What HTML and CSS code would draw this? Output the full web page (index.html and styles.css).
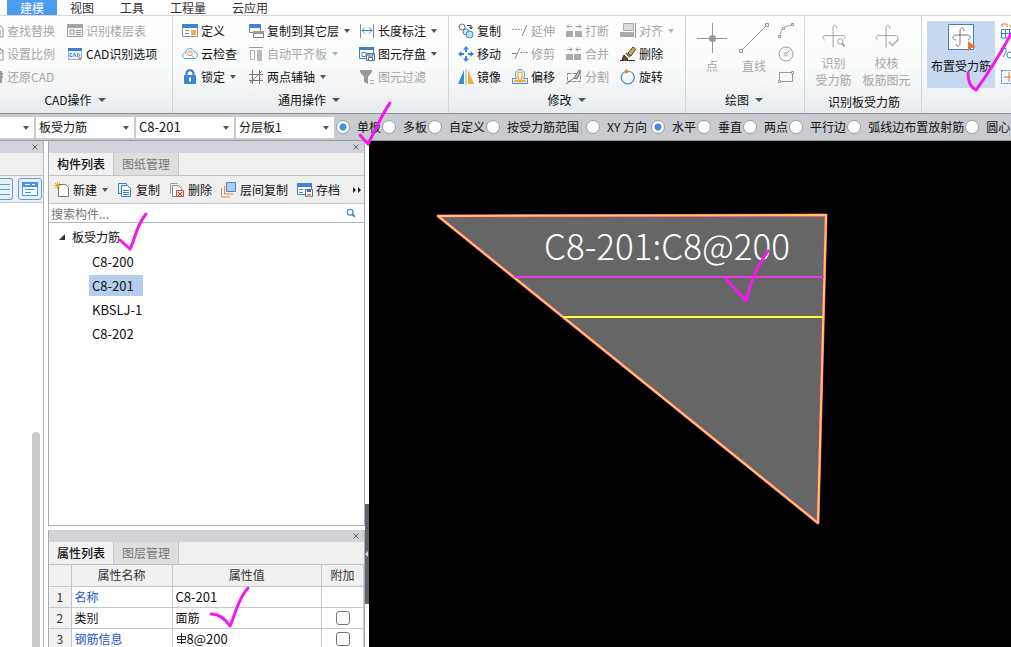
FILE: index.html
```html
<!DOCTYPE html>
<html lang="zh-CN">
<head>
<meta charset="utf-8">
<title>建模</title>
<link rel="stylesheet" href="styles.css">
</head>
<body>
<div class="app">
  <nav class="menu">
    <button class="menu-tab active">建模</button>
    <button class="menu-tab">视图</button>
    <button class="menu-tab">工具</button>
    <button class="menu-tab wide">工程量</button>
    <button class="menu-tab wide">云应用</button>
  </nav>

  <div class="ribbon">
    <section class="group group-cad">
      <div class="tools cols-cad">
        <button class="tool" disabled><svg class="clipped" viewBox="12 0 4 16"><path d="M8 3h5l2 3v8H8M12 7v6" fill="none" stroke="#999"/></svg>查找替换</button>
        <button class="tool" disabled><svg class="icon" viewBox="0 0 16 16"><path d="M.5 2.500h15v11H.5z" fill="#f2f2f2" stroke="#a5a5a5"/><path d="M0 1h16v4H0z" fill="#a5a5a5"/><path d="M3 7h4v4H3zM9 7.500h5M9 9.500h5M9 11.500h5" fill="none" stroke="#999"/></svg>识别楼层表</button>
        <button class="tool" disabled><svg class="clipped" viewBox="12 0 4 16"><path d="M8 4h7v10H8M12 2l3 3-3 3" fill="none" stroke="#999"/></svg>设置比例</button>
        <button class="tool"><svg class="icon" viewBox="0 0 16 16"><path d="M1.500 2.500h13v11h-13z" fill="#eaf3fd" stroke="#8db5e6"/><path d="M1 2h14v3H1z" fill="#3c7fd0"/><path d="M5 7.500H3v3h2M6 11l1.500-4L9 11M10.500 7.500v3c3 0 3-3 0-3" fill="none" stroke="#4a90d9"/><path d="M11 10l4 2-2 3z" fill="#ef8b55"/></svg>CAD识别选项</button>
        <button class="tool" disabled><svg class="clipped" viewBox="12 0 4 16"><path d="M13 2v12M10 5h5M10 8h5" fill="none" stroke="#999" stroke-width="2"/></svg>还原CAD</button>
      </div>
      <button class="caption drop">CAD操作</button>
    </section>

    <section class="group group-common">
      <div class="tools cols-common">
        <button class="tool"><svg class="icon" viewBox="0 0 16 16"><path d="M.5 2.500h15v11H.5z" fill="#fff" stroke="#7f97b5"/><path d="M0 1h16v4H0z" fill="#4484cf"/><path d="M3 7.500h4M3 10.500h4" stroke="#888"/><path d="M9 7h5v5H9z" fill="#f0b33c"/></svg>定义</button>
        <button class="tool drop"><svg class="icon" viewBox="0 0 16 16"><path d="M1.500 2.500h11v7h-11z" fill="#fff" stroke="#6b87ab"/><path d="M1 1h12v4H1z" fill="#4484cf"/><path d="M5.500 8.500h10v6h-10z" fill="#fff" stroke="#777"/><path d="M5 8h11v3H5z" fill="#999"/></svg>复制到其它层</button>
        <button class="tool drop"><svg class="icon" viewBox="0 0 16 16"><path d="M1.500 1v14M14.500 1v14" stroke="#888"/><path d="M3 7.500h10M6 4.500l-3 3 3 3M10 4.500l3 3-3 3" fill="none" stroke="#3c7fc9"/></svg>长度标注</button>
        <button class="tool"><svg class="icon" viewBox="0 0 16 16"><path d="M4 12.500C-.5 12.500-.5 7 3.500 7 4 1.500 11 1 12 6c4.500 0 4.500 6.500 0 6.500z" fill="#fff" stroke="#5b9be0"/><circle cx="8" cy="7.500" r="2.300" fill="none" stroke="#e98b46"/><path d="M10 9.500l2 2.500" stroke="#e98b46"/></svg>云检查</button>
        <button class="tool drop" disabled><svg class="icon" viewBox="0 0 16 16"><path d="M1 1.500h14" stroke="#999"/><path d="M2.500 4.500h4v9h-4z" fill="#fff" stroke="#aaa"/><path d="M9 4h5v11H9z" fill="#bbb"/></svg>自动平齐板</button>
        <button class="tool drop"><svg class="icon" viewBox="0 0 16 16"><path d="M.5 1.500h14v11H.5z" fill="#fff" stroke="#3b80c9"/><path d="M0 1h15v3H0z" fill="#3b80c9"/><path d="M3 6.500h4v4H3z" fill="none" stroke="#4b89cc"/><path d="M7.500 7.500h8v7h-8z" fill="#e9f2fc" stroke="#526f94"/><path d="M9.500 11.500h4v3h-4zM9 8h5v2H9z" fill="#fff" stroke="#526f94"/></svg>图元存盘</button>
        <button class="tool drop"><svg class="icon" viewBox="0 0 16 16"><path d="M4.500 7V5c0-5 7-5 7 0v2" fill="none" stroke="#3c78c4" stroke-width="2"/><rect x="2" y="6" width="12" height="9" rx="1" fill="#3f83d3"/><path d="M8 8.500v4" stroke="#fff" stroke-width="2"/></svg>锁定</button>
        <button class="tool drop"><svg class="icon" viewBox="0 0 16 16"><path d="M4.500 1v14M11.500 1v14M1 5.500h14M1 11.500h14" stroke="#777"/><path d="M2 14L14 2" stroke="#a8694a"/></svg>两点辅轴</button>
        <button class="tool" disabled><svg class="icon" viewBox="0 0 16 16"><path d="M1 1h12v2L9 8v7l-4-2V8L1 3z" fill="#999"/><path d="M11 11.500h4M11 14.500h4" stroke="#aaa"/></svg>图元过滤</button>
      </div>
      <button class="caption drop">通用操作</button>
    </section>

    <section class="group group-edit">
      <div class="tools cols-edit">
        <button class="tool"><svg class="icon" viewBox="0 0 16 16"><circle cx="4" cy="4" r="3" fill="#f3f3f3" stroke="#777"/><path d="M9 2.500h4v3M11.500 4L13 6l1.500-2" fill="none" stroke="#333"/><circle cx="8" cy="9" r="3" fill="#d9ebfb" stroke="#3d86c9"/><circle cx="11.500" cy="11.500" r="3.500" fill="#bfe0f8" stroke="#3d86c9"/></svg>复制</button>
        <button class="tool" disabled><svg class="icon" viewBox="0 0 16 16"><path d="M0 6.500h10" stroke="#999" stroke-dasharray="2 1"/><path d="M10 13l5-11" stroke="#888"/></svg>延伸</button>
        <button class="tool" disabled><svg class="icon" viewBox="0 0 16 16"><path d="M0 8h7v6H0zM9 8h7v6H9z" fill="#aaa"/><path d="M6 3.500H1M3 1.500l-2 2 2 2M10 3.500h5M13 1.500l2 2-2 2" fill="none" stroke="#999"/></svg>打断</button>
        <button class="tool drop" disabled><svg class="icon" viewBox="0 0 16 16"><path d="M3.500.5h10v7h-10z" fill="#ddd" stroke="#aaa"/><path d="M0 9h14v5H0z" fill="#aaa"/><path d="M15.500 0v15" stroke="#999"/></svg>对齐</button>
        <button class="tool"><svg class="icon" viewBox="0 0 16 16"><path d="M8 0l3 3.500H9V6H7V3.500H5zM8 16l-3-3.500h2V10h2v2.500h2zM0 8l3.500-3v2H6v2H3.500v2zM16 8l-3.500 3V9H10V7h2.500V5z" fill="#3d82cb"/></svg>移动</button>
        <button class="tool" disabled><svg class="icon" viewBox="0 0 16 16"><path d="M0 7.500h5M3 13L8 2" stroke="#888"/><path d="M8 6.500h8" stroke="#999" stroke-dasharray="2 1"/></svg>修剪</button>
        <button class="tool" disabled><svg class="icon" viewBox="0 0 16 16"><path d="M0 8h7v6H0zM8 8h7v6H8z" fill="#aaa"/><path d="M1 3.500h5M4 1.500l2 2-2 2M15 3.500h-5M12 1.500l-2 2 2 2" fill="none" stroke="#999"/></svg>合并</button>
        <button class="tool"><svg class="icon" viewBox="0 0 16 16"><path d="M0 14.500h4M7 14.500h8" stroke="#333"/><path d="M8 7l5-6 2.500 2-4.500 7z" fill="#d9a866" stroke="#5e3a1c"/><path d="M4 9l4 4-2 1.500-4-1z" fill="#a33b28" stroke="#3b2a20"/><path d="M6 7l4 4" stroke="#4c8650" stroke-width="2"/></svg>删除</button>
        <button class="tool"><svg class="icon" viewBox="0 0 16 16"><path d="M6 1v14H0z" fill="#4386d6"/><path d="M10 1v14h6z" fill="#f0ac32"/><path d="M8 0v16" stroke="#b0b0b0"/></svg>镜像</button>
        <button class="tool"><svg class="icon" viewBox="0 0 16 16"><path d="M.5 14.500v-5h4C2 5 4 .5 8 .5s6 4.500 3.500 9h4v5z" fill="none" stroke="#4d8ed6"/><path d="M3 12.500v-1h4.500C4.500 7 5.500 3 8 3s3.500 4 .5 8.500H13v1z" fill="none" stroke="#efac3a" stroke-width="1.300"/></svg>偏移</button>
        <button class="tool" disabled><svg class="icon" viewBox="0 0 16 16"><path d="M1.500 4.500h13v8h-13z" fill="none" stroke="#888" stroke-dasharray="4 1"/><path d="M0 15L8 9M8 9l5-8 2 1-4 8z" fill="#bbb" stroke="#777"/></svg>分割</button>
        <button class="tool"><svg class="icon" viewBox="0 0 16 16"><path d="M10.500 2.500A6.500 6.500 0 1 1 5 2.500" fill="none" stroke="#4a91dc" stroke-width="1.300"/><path d="M5 0l6 2.500L5 5z" fill="#ed8b35"/></svg>旋转</button>
      </div>
      <button class="caption drop">修改</button>
    </section>

    <section class="group group-draw">
      <div class="bigs">
        <button class="big" disabled><svg class="picto" viewBox="0 0 30 30"><path d="M15.500 0v30M0 15.500h30" stroke="#999"/><circle cx="15.500" cy="15.500" r="3.500" fill="#999"/></svg><span>点</span></button>
        <button class="big" disabled><svg class="picto" viewBox="0 0 30 30"><path d="M3 27L27 3" stroke="#999"/><path d="M.5 26.500h3v3h-3zM26.500.5h3v3h-3z" fill="#fff" stroke="#999"/></svg><span>直线</span></button>
        <div class="stack">
          <button class="mini" aria-label="弧" disabled><svg class="icon" viewBox="0 0 16 16"><path d="M2 14C2 7 5 3 14 2" fill="none" stroke="#999"/><path d="M.5 12.500h2v2h-2zM4.500 4.500h2v2h-2zM13.500.5h2v2h-2z" fill="#fff" stroke="#999"/></svg></button>
          <button class="mini" aria-label="圆" disabled><svg class="icon" viewBox="0 0 16 16"><circle cx="8" cy="8" r="7" fill="none" stroke="#999"/><circle cx="7.500" cy="8.500" r="1.500" fill="none" stroke="#999"/><path d="M8.500 7.500l3-3" stroke="#999"/></svg></button>
          <button class="mini" aria-label="矩形" disabled><svg class="icon" viewBox="0 0 16 16"><path d="M1.500 3.500h13v9h-13z" fill="none" stroke="#999"/><path d="M.5 11.500h2v2h-2zM13.500 2.500h2v2h-2z" fill="#fff" stroke="#999"/></svg></button>
        </div>
      </div>
      <button class="caption drop">绘图</button>
    </section>

    <section class="group group-detect">
      <div class="bigs">
        <button class="big" disabled><svg class="picto" viewBox="0 0 30 30"><path d="M18 6c0-4.500-4-4.500-4-1v22M26 18c2-2 1-4-1-4H5c-3 0-3 4 0 5" fill="none" stroke="#999"/><circle cx="22" cy="20.500" r="3" fill="#f7f8f9" stroke="#999"/><path d="M24 23l3 3" stroke="#999" stroke-width="2"/></svg><span>识别<br>受力筋</span></button>
        <button class="big" disabled><svg class="picto" viewBox="0 0 30 30"><path d="M18 6c0-4.500-4-4.500-4-1v22M26 18c2-2 1-4-1-4H5c-3 0-3 4 0 5" fill="none" stroke="#999"/><path d="M17 21l4 4 7-7" fill="none" stroke="#bbb" stroke-width="2"/></svg><span>校核<br>板筋图元</span></button>
      </div>
      <button class="caption">识别板受力筋</button>
    </section>

    <section class="group group-place">
      <div class="bigs">
        <button class="big chosen"><svg class="picto" viewBox="0 0 30 30"><path d="M2.500 1.500h25v25h-25z" fill="#fff" stroke="#3c7fd0"/><path d="M18 8c0-4-4-4-4 0v12c0 4-4 4-4 1M10 17c-4 0-4-5 0-5h11c4 0 4 4 1 5" fill="none" stroke="#777"/><path d="M22 18l8 6-4 1-4 3z" fill="#e87530"/></svg><span>布置受力筋</span></button>
        <div class="stack">
          <button class="mini" aria-label="表格"><svg class="icon" viewBox="0 0 16 16"><path d="M0 6.500h16M.5 6v9h16M0 10.500h16M4.500 6v9M8.500 6v9" fill="none" stroke="#3c7fd0"/><path d="M1 4V1h5v3M8 3h8" fill="none" stroke="#e87530"/></svg></button>
          <button class="mini" aria-label="应用"><svg class="icon" viewBox="0 0 16 16"><path d="M0 2.500h5V6l-3 5" fill="none" stroke="#3c7fd0"/><circle cx="9" cy="9" r="3" fill="none" stroke="#3c7fd0"/></svg></button>
          <button class="mini" aria-label="范围"><svg class="icon" viewBox="0 0 16 16"><path d="M.5 1.500h15v13H.5z" fill="none" stroke="#3c7fd0" stroke-dasharray="2 1"/><path d="M8 3v10M3 8h10" stroke="#e87530"/></svg></button>
        </div>
      </div>
    </section>
  </div>

  <div class="options">
    <span class="picker picker-first"><select aria-label="楼层"><option></option></select></span>
    <span class="picker"><select aria-label="构件类型"><option>板受力筋</option></select></span>
    <span class="picker"><select class="code" aria-label="构件"><option>C8-201</option></select></span>
    <span class="picker"><select aria-label="分层"><option>分层板1</option></select></span>
    <div class="choices">
      <label class="choice"><input type="radio" name="scope" checked>单板</label>
      <label class="choice"><input type="radio" name="scope">多板</label>
      <label class="choice"><input type="radio" name="scope">自定义</label>
      <label class="choice"><input type="radio" name="scope">按受力筋范围</label>
    </div>
    <div class="choices second">
      <label class="choice"><input type="radio" name="dir">XY 方向</label>
      <label class="choice"><input type="radio" name="dir" checked>水平</label>
      <label class="choice"><input type="radio" name="dir">垂直</label>
      <label class="choice"><input type="radio" name="dir">两点</label>
      <label class="choice"><input type="radio" name="dir">平行边</label>
      <label class="choice"><input type="radio" name="dir">弧线边布置放射筋</label>
      <label class="choice"><input type="radio" name="dir">圆心</label>
    </div>
  </div>

  <main class="workspace">
    <aside class="nav-panel">
      <header class="dock-head"><button class="close" aria-label="关闭"><svg viewBox="0 0 6 6"><path d="M.5.5l5 5M5.500.5l-5 5" stroke="#666"/></svg></button></header>
      <div class="tabs"></div>
      <div class="view-bar">
        <button class="view cut" aria-label="列表"><svg class="icon" viewBox="0 0 16 16"><path d="M0 3.500h12M0 8.500h12M0 13.500h12" stroke="#5b9de8"/></svg></button>
        <button class="view" aria-label="卡片"><svg class="icon" viewBox="0 0 16 16"><path d="M.5 1.500h15v13H.5z" fill="#fff" stroke="#4d92e2"/><path d="M0 1h16v5H0z" fill="#4d92e2"/><path d="M3 3.500h5M10 3.500h3" stroke="#fff"/><path d="M3 8.500h10M3 11.500h6" stroke="#4d92e2"/></svg></button>
      </div>
      <div class="nav-body"><div class="scroll-thumb"></div></div>
    </aside>

    <aside class="dock">
      <section class="list-panel">
        <header class="dock-head"><button class="close" aria-label="关闭"><svg viewBox="0 0 6 6"><path d="M.5.5l5 5M5.500.5l-5 5" stroke="#666"/></svg></button></header>
        <div class="tabs"><button class="tab on">构件列表</button><button class="tab">图纸管理</button></div>
        <div class="list-bar">
          <button class="act drop"><svg class="icon" viewBox="0 0 16 16"><path d="M4.500 2.500h7l3 3v9h-10z" fill="#fff" stroke="#777"/><path d="M3.500 0v7M0 3.500h7M1 1l5 5M6 1L1 6" stroke="#eda638"/></svg>新建</button>
          <button class="act"><svg class="icon" viewBox="0 0 16 16"><path d="M1.500 1.500h8v10h-8z" fill="#e5f0fc" stroke="#3d7fc7"/><path d="M4.500 3.500h6l3 3v8h-9z" fill="#fff" stroke="#3d7fc7"/><path d="M6 8.500h6M6 10.500h6M6 12.500h6" stroke="#3d7fc7"/></svg>复制</button>
          <button class="act"><svg class="icon" viewBox="0 0 16 16"><path d="M1.500 11.500v-10h7" fill="none" stroke="#999"/><path d="M3.500 3.500h6l3 3v8h-9z" fill="#fff" stroke="#888"/><path d="M7.500 8.500h7v6h-7z" fill="#f7d6d2" stroke="#bd5148"/><path d="M9 10l4 4M13 10l-4 4" stroke="#bd3128"/></svg>删除</button>
          <button class="act"><svg class="icon" viewBox="0 0 16 16"><path d="M.5 6v9H9M3.500 4v8H12" fill="none" stroke="#e9893d"/><path d="M5.500.5h9v9h-9z" fill="#a9cdf5" stroke="#4c87cb"/></svg>层间复制</button>
          <button class="act"><svg class="icon" viewBox="0 0 16 16"><path d="M.5 1.500h14v11H.5z" fill="#fff" stroke="#4484cf"/><path d="M0 1h15v4H0z" fill="#4484cf"/><path d="M2 7.500h4M2 10.500h4" stroke="#4484cf"/><path d="M8.500 7.500h7v7h-7z" fill="#fff" stroke="#526f94"/><path d="M10 8h4v2h-4z" fill="#526f94"/><path d="M10 12h4v3h-4z" fill="#ef9b57"/></svg>存档</button>
          <button class="more" aria-label="更多"><svg viewBox="0 0 8 6"><path d="M0 0l3 3-3 3zM5 0l3 3-3 3z" fill="#222"/></svg></button>
        </div>
        <div class="search">
          <input type="text" aria-label="搜索构件" placeholder="搜索构件...">
          <svg class="lens" viewBox="0 0 12 12"><circle cx="5" cy="5" r="3.500" fill="none" stroke="#3d8fd0" stroke-width="1.500"/><path d="M7.500 7.500l3 3" stroke="#2e6da3" stroke-width="2"/></svg>
        </div>
        <div class="tree">
          <div class="branch"><svg class="twist" viewBox="0 0 6 6"><path d="M6 0v6H0z" fill="#333"/></svg>板受力筋</div>
          <ul class="leaves code">
            <li><span>C8-200</span></li>
            <li><span class="picked">C8-201</span></li>
            <li><span>KBSLJ-1</span></li>
            <li><span>C8-202</span></li>
          </ul>
        </div>
      </section>

      <section class="prop-panel">
        <header class="dock-head"><button class="close" aria-label="关闭"><svg viewBox="0 0 6 6"><path d="M.5.5l5 5M5.500.5l-5 5" stroke="#666"/></svg></button></header>
        <div class="tabs"><button class="tab on">属性列表</button><button class="tab">图层管理</button></div>
        <table class="props">
          <colgroup><col class="c-no"><col class="c-name"><col><col class="c-add"></colgroup>
          <thead><tr><th></th><th>属性名称</th><th>属性值</th><th>附加</th></tr></thead>
          <tbody>
            <tr><th>1</th><td class="key">名称</td><td class="code">C8-201</td><td></td></tr>
            <tr><th>2</th><td>类别</td><td>面筋</td><td class="tick"><input type="checkbox" aria-label="附加类别"></td></tr>
            <tr><th>3</th><td class="key">钢筋信息</td><td class="code"><svg class="rebar" viewBox="0 0 11 11"><path d="M5.500 0v11M1 9.500h9M1.500 3.500h8v3h-8z" fill="none" stroke="#222"/></svg>8@200</td><td class="tick"><input type="checkbox" aria-label="附加钢筋信息"></td></tr>
          </tbody>
        </table>
      </section>
    </aside>

    <div class="splitter"><button class="grip" aria-label="折叠"></button></div>

    <div class="canvas">
      <svg class="drawing" width="642" height="506" viewBox="369 141 642 506">
        <path d="M438 216L826 215L818 523Z" fill="#666" stroke="#e83c9b" stroke-width="3" stroke-linejoin="round"/>
        <path d="M438 216L826 215L818 523Z" fill="none" stroke="#ffc95a" stroke-width="2" stroke-linejoin="round"/>
        <path d="M514 277H824" stroke="#e839e3" stroke-width="2"/>
        <path d="M563 317H823" stroke="#ffff32" stroke-width="2"/>
        <text class="rebar-label" x="544" y="260">C8-201:C8@200</text>
      </svg>
    </div>
  </main>

  <svg class="marks" width="1011" height="647" viewBox="0 0 1011 647">
    <path d="M390 103C382 114 377 127 368 144L360 135"/>
    <path d="M1011 34C999 56 985 78 976 90C970 87 968 80 968 73"/>
    <path d="M146 214C136 226 136 237 130 249L120 240"/>
    <path d="M768 251C758 265 750 283 746 301L726 279"/>
    <path d="M248 588C237 600 235 616 230 626C224 617 217 614 211 614"/>
  </svg>
</div>
</body>
</html>
```

FILE: styles.css
```css
* { box-sizing: border-box; }

body {
  margin: 0;
  font: 12px/16px "Noto Sans CJK SC", "Noto Sans", sans-serif;
  color: #111;
  background: #fff;
}

button, select, input { font: inherit; color: inherit; }

button {
  border: 0;
  padding: 0;
  background: none;
  white-space: nowrap;
}

button:disabled { color: #a6a6a6; }

.app {
  position: relative;
  display: flex;
  flex-direction: column;
  height: 100vh;
  overflow: hidden;
}

.icon { width: 16px; height: 16px; flex: none; }

.code { font-size: 13px; }

.drop::after {
  content: "";
  border: 3px solid transparent;
  border-top: 4px solid #555;
  border-bottom: 0;
  margin-left: 2px;
}
.drop:disabled::after { border-top-color: #b5b5b5; }

/* Menu */
.menu {
  display: flex;
  flex: none;
  height: 16px;
  padding-left: 7px;
  border-bottom: 1px solid #d5d8da;
}
.menu-tab {
  width: 50px;
  height: 15px;
  line-height: 12px;
  color: #333;
}
.menu-tab.wide { width: 62px; }
.menu-tab.active { background: #4b9cf0; color: #fff; }

/* Ribbon */
.ribbon {
  display: flex;
  flex: none;
  height: 98px;
  background: linear-gradient(#fff, #fbfcfc 50%, #e8ebee);
  border-bottom: 1px solid #8c9094;
}
.group {
  display: flex;
  flex-direction: column;
  flex: none;
  padding-top: 3px;
  border-right: 1px solid #d3d6d9;
}
.group-cad { width: 173px; }
.group-common { width: 276px; padding-left: 9px; }
.group-edit { width: 237px; padding-left: 9px; }
.group-draw { width: 119px; padding-left: 5px; }
.group-detect { width: 117px; padding-left: 2px; }
.group-place { flex: 1; min-width: 0; padding-left: 5px; border: 0; overflow: hidden; }

.tools { display: grid; grid-auto-rows: 23px; }
.cols-cad { grid-template-columns: 67px 1fr; }
.cols-common { grid-template-columns: 66px 111px 1fr; }
.cols-edit { grid-template-columns: 54px 54px 54px 1fr; }

.tool { display: flex; align-items: center; gap: 3px; }
.clipped { width: 4px; height: 16px; flex: none; }

.caption {
  display: flex;
  align-items: center;
  justify-content: center;
  gap: 4px;
  height: 24px;
  padding-right: 22px;
}
.caption.drop::after { border-width: 4px 4px 0; }
.group-common .caption { padding-right: 12px; }
.group-edit .caption { padding-right: 10px; }
.group-detect .caption { padding: 3px 0 0; }
.group-draw .caption { padding-right: 7px; }

.bigs { display: flex; height: 69px; }
.big {
  display: flex;
  flex: none;
  flex-direction: column;
  align-items: center;
  width: 42px;
  padding-top: 4px;
  line-height: 17px;
}
.group-detect .big { width: 53px; }
.picto { width: 30px; height: 30px; margin-bottom: 4px; }
.big.chosen {
  width: 68px;
  height: 67px;
  margin: 2px 6px 0 0;
  padding-top: 2px;
  background: #c8d8ef;
}
.stack { display: flex; flex: none; flex-direction: column; margin-left: 3px; }
.group-place .stack { margin-left: 0; }
.mini { display: flex; align-items: center; height: 23px; }

/* Option strip */
.options {
  display: flex;
  flex: none;
  align-items: center;
  height: 27px;
  gap: 2px;
  background: #c9cbd0;
  border-bottom: 1px solid #96999d;
  overflow: hidden;
}
.picker { position: relative; flex: none; width: 98px; }
.picker-first { width: 34px; }
.picker select {
  display: block;
  appearance: none;
  width: 100%;
  height: 21px;
  padding: 0 3px;
  border: 0;
  border-radius: 0;
  background: #fff;
}
.picker::after {
  content: "";
  position: absolute;
  right: 5px;
  top: 9px;
  border: 3px solid transparent;
  border-top: 4px solid #555;
  border-bottom: 0;
}
.choices { display: flex; flex: none; gap: 1px; }
.choices.second { padding-left: 4px; border-left: 1px solid #b4b6ba; }
.choice { display: flex; align-items: center; gap: 7px; white-space: nowrap; }
.second .choice:first-child { min-width: 64px; }
.choice input {
  appearance: none;
  flex: none;
  width: 14px;
  height: 14px;
  margin: 0;
  border: 1px solid #9a9da1;
  border-radius: 50%;
  background: #fff;
}
.choice input:checked { background: radial-gradient(circle, #3f8fe8 3px, #fff 4px); }

/* Workspace */
.workspace { display: flex; flex: 1; min-height: 0; }

.dock-head {
  display: flex;
  justify-content: flex-end;
  align-items: center;
  flex: none;
  height: 12px;
  padding-right: 5px;
  background: #d2d4da;
}
.close svg { display: block; width: 6px; height: 6px; }

.tabs {
  display: flex;
  flex: none;
  height: 23px;
  background: #efefef;
  border-bottom: 1px solid #c0c2c5;
}
.tab {
  width: 65px;
  background: #dfdfdf;
  color: #777;
  border-right: 1px solid #c6c6c6;
}
.tab.on { background: #f1f1f1; color: #111; font-weight: 500; }

.nav-panel {
  display: flex;
  flex-direction: column;
  flex: none;
  width: 44px;
  border-right: 1px solid #b6b8bb;
}
.view-bar {
  display: flex;
  align-items: center;
  justify-content: flex-end;
  gap: 5px;
  height: 27px;
  padding-right: 1px;
  background: #efefef;
  border-bottom: 1px solid #b8cbe0;
}
.view {
  display: flex;
  align-items: center;
  justify-content: center;
  flex: none;
  width: 24px;
  height: 22px;
  border: 1px solid #5b9de8;
  border-radius: 3px;
  background: #e6f1fd;
}
.view.cut { width: 14px; border-left: 0; border-radius: 0 3px 3px 0; }
.nav-body { display: flex; flex: 1; justify-content: flex-end; padding: 229px 3px 0 0; }
.scroll-thumb { width: 8px; border-radius: 4px 4px 0 0; background: #c9c9c9; }

.dock {
  display: flex;
  flex-direction: column;
  flex: none;
  width: 317px;
  margin-left: 4px;
}
.list-panel {
  display: flex;
  flex-direction: column;
  flex: none;
  height: 385px;
  border: solid #a9abae;
  border-width: 0 1px 1px;
}
.list-bar {
  display: flex;
  align-items: center;
  flex: none;
  gap: 9px;
  height: 28px;
  padding-left: 5px;
  background: #efefef;
  border-bottom: 1px solid #c9c9c9;
}
.act { display: flex; align-items: center; gap: 3px; }
.more { flex: none; margin-left: 4px; }
.more svg { display: block; width: 8px; height: 6px; }

.search {
  display: flex;
  align-items: center;
  flex: none;
  height: 19px;
  padding: 0 8px 0 2px;
  border-bottom: 1px solid #b4b6b9;
}
.search input {
  flex: 1;
  min-width: 0;
  height: 18px;
  padding: 0;
  border: 0;
  outline: 0;
}
.search input::placeholder { color: #777; opacity: 1; }
.lens { width: 10px; height: 10px; }

.tree { padding-top: 2px; }
.branch {
  display: flex;
  align-items: center;
  gap: 7px;
  height: 24px;
  padding-left: 10px;
}
.twist { width: 6px; height: 6px; }
.leaves { margin: 0; padding: 0 0 0 40px; list-style: none; }
.leaves li { display: flex; align-items: center; height: 24px; }
.leaves span { padding: 0 9px 0 3px; line-height: 21px; }
.leaves .picked { background: #b3cdec; }

.prop-panel {
  flex: 1;
  min-height: 0;
  margin-top: 4px;
  border: solid #a9abae;
  border-width: 0 1px;
  overflow: hidden;
}
.props {
  width: 100%;
  table-layout: fixed;
  border-collapse: collapse;
}
.c-no { width: 22px; }
.c-name { width: 101px; }
.c-add { width: 42px; }
.props th, .props td {
  height: 21px;
  padding: 0 3px;
  border: solid #c6c8cb;
  border-width: 0 1px 1px 0;
  line-height: 20px;
  text-align: left;
  font-weight: 400;
}
.props th { background: #f0f0f0; text-align: center; color: #333; }
.props .key { color: #1f55c4; }
.props .tick { text-align: center; }
.tick input {
  appearance: none;
  display: block;
  width: 14px;
  height: 14px;
  margin: 0 auto;
  border: 1px solid #777;
  border-radius: 3px;
  background: #fff;
}
.rebar { width: 11px; height: 11px; }

.splitter { flex: none; width: 4px; padding-top: 363px; }
.grip {
  display: flex;
  align-items: center;
  width: 4px;
  height: 100px;
  background: #5c636b;
}
.grip::before {
  content: "";
  border: 3px solid transparent;
  border-right-color: #d5d8db;
  border-left: 0;
}

.canvas { flex: 1; min-width: 0; background: #000; overflow: hidden; }
.drawing { display: block; }
.rebar-label { font-size: 35px; font-weight: 300; fill: #fff; }

.marks {
  position: absolute;
  left: 0;
  top: 0;
  pointer-events: none;
  fill: none;
  stroke: #f318ee;
  stroke-width: 3;
  stroke-linecap: round;
  stroke-linejoin: round;
}
```
